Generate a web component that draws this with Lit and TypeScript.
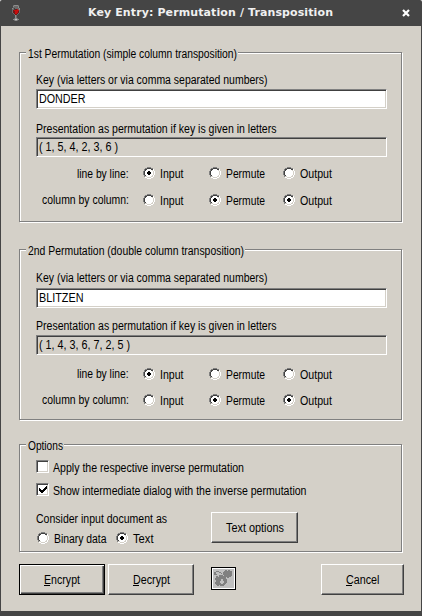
import { LitElement, html, svg, css, nothing } from "lit";
import { customElement, property } from "lit/decorators.js";

/** Draws a small pixel pattern, one character per pixel. */
const PALETTE: Record<string, string> = {
  g: "#808080", k: "#404040", w: "#ffffff", l: "#d4d0c8", b: "#000000",
  s: "#c0c0c0", a: "#8c8c8c", m: "#6a6a6a", r: "#c80c0c", d: "#701818", p: "#c86a6a",
};

const pixels = (rows: string[]) => {
  const runs: unknown[] = [];
  rows.forEach((row, y) => {
    let x = 0;
    while (x < row.length) {
      let end = x + 1;
      while (row[end] === row[x]) end++;
      const fill = PALETTE[row[x]];
      if (fill) runs.push(svg`<rect x=${x} y=${y} width=${end - x} height="1" fill=${fill}></rect>`);
      x = end;
    }
  });
  const w = Math.max(...rows.map((r) => r.length));
  return html`<svg width=${w} height=${rows.length} viewBox="0 0 ${w} ${rows.length}" shape-rendering="crispEdges">${runs}</svg>`;
};

const RADIO = [
  "....gggg....",
  "..ggkkkkgg..",
  ".gkkwwwwkkw.",
  ".gkwwwwwwlw.",
  "gkwwwwwwwwlw",
  "gkwwwwwwwwlw",
  "gkwwwwwwwwlw",
  "gkwwwwwwwwlw",
  ".gkwwwwwwlw.",
  ".gllwwwwllw.",
  "..wwllllww..",
  "....wwww....",
];
const RADIO_ON = RADIO.map((row, y) => {
  if (y === 4 || y === 7) return row.slice(0, 5) + "bb" + row.slice(7);
  if (y === 5 || y === 6) return row.slice(0, 4) + "bbbb" + row.slice(8);
  return row;
});
const TICK = [
  ".......b",
  "......bb",
  "b....bbb",
  "bb..bbb.",
  "bbbbbb..",
  ".bbbb...",
  "..bb....",
];
const GLASS = [
  ".maaaam.",
  ".ammmma.",
  ".mmmmma.",
  "amkmmmma",
  "mmkddrma",
  "mdrrrrrm",
  "mddrrrdm",
  "mddrrrdm",
  ".mdrrdm.",
  "..mddm..",
  "...am...",
  "...am...",
  "...am...",
  "..maam..",
  ".aassaa.",
  "..maam..",
];
const GEARS = [
  "............gg.gg..",
  "...ggg.....gggggggg",
  ".gg...gg..ggggggggg",
  ".gg.....g.ggggggggg",
  ".ggg......ggggggggg",
  "......gggg.gggggggg",
  "...gg.gggggggggggg.",
  "...gggggggggg.gg...",
  "..ggggggggggg......",
  "..ggggggssgggg.....",
  "...gggggssgggg.....",
  "...ggggssssggg.....",
  "..gggggssssggg.....",
  "..ggggggssggg......",
  "...ggggggggg.......",
  "....gg.gggg........",
];

@customElement("fit-text")
export class FitText extends LitElement {
  @property() text = "";
  @property({ type: Number }) w = 0;
  @property({ type: Boolean }) mnemonic = false;
  static styles = css`
    :host { display: block; height: 14px; flex: none; }
    svg { display: block; overflow: visible; }
    text { font: 12px "Liberation Sans", Arial, sans-serif; fill: #000; }
    .bar { fill: #000; }
  `;
  render() {
    return html`<svg width=${this.w} height="14">
      <text x="0" y="11" textLength=${this.w} lengthAdjust="spacingAndGlyphs">${this.text}</text>
      ${this.mnemonic ? svg`<rect class="bar" x="0" y="12" width="6" height="1"></rect>` : nothing}
    </svg>`;
  }
}

const label = (text: string, w: number, cls = "") =>
  html`<fit-text class=${cls} .text=${text} .w=${w}></fit-text>`;

interface Permutation {
  name: string; title: string; titleWidth: number;
  key: string; keyWidth: number; order: string; orderWidth: number;
}

const PERMUTATIONS: Permutation[] = [
  { name: "first", title: "1st Permutation (simple column transposition)", titleWidth: 209,
    key: "DONDER", keyWidth: 46.5, order: "( 1, 5, 4, 2, 3, 6 )", orderWidth: 79 },
  { name: "second", title: "2nd Permutation (double column transposition)", titleWidth: 216,
    key: "BLITZEN", keyWidth: 44.5, order: "( 1, 4, 3, 6, 7, 2, 5 )", orderWidth: 91 },
];

@customElement("app-root")
export class AppRoot extends LitElement {
  static styles = css`
    :host { display: block; background: #fff; }
    * { box-sizing: border-box; }
    svg { display: block; }
    .window { width: 422px; height: 616px; background: #454545; padding: 0 1px 5px; border-radius: 2px 2px 0 0; display: flex; flex-direction: column; }
    .bar { height: 26px; flex: none; display: flex; align-items: flex-start; }
    .glass { margin: 5px 0 0 11px; width: 8px; }
    .title { margin: 3px 0 0 68px; width: 245px; height: 20px; overflow: visible; }
    .title text { font: bold 11px "DejaVu Sans", sans-serif; fill: #f0f0f0; }
    .close { margin: 9px 0 0 69px; }
    .body { flex: 1; background: #d4d0c8; padding: 26px 0 0 18px; }

    .group { width: 383px; border: 1px solid #808080; box-shadow: 1px 1px 0 #fff, inset 1px 1px 0 #fff; padding-left: 16px; }
    .first { height: 170px; --a: 12px; --b: 2px; --c: 13px; --d: 1px; }
    .second { height: 171px; margin-top: 27px; --a: 13px; --b: 3px; --c: 11px; --d: 2px; }
    .options { height: 108px; margin-top: 24px; }
    .legend { width: max-content; margin: -6px 0 0 -10px; padding: 0 1px 0 2px; background: #d4d0c8; }

    .keylabel { margin-top: var(--a); }
    .orderlabel { margin-top: var(--c); }
    .field { width: 351px; height: 20px; background: #fff; border: 1px solid; border-color: #808080 #fff #fff #808080; box-shadow: inset 1px 1px 0 #404040, inset -1px -1px 0 #d4d0c8; padding: 2px 0 0 2px; }
    .key { margin-top: var(--b); }
    .order { margin-top: var(--d); background: #d4d0c8; }
    .line { display: grid; grid-template-columns: 92.5px 66px 74px auto; height: 14px; }
    .line > fit-text { justify-self: end; }
    .l1 { margin-top: 10px; }
    .second .l1 { margin-top: 12px; }
    .l2 { margin-top: 12px; }
    .line .choice { margin: 1px 0 0 14.5px; }
    .first .l1 .choice { margin-top: 0; }
    .choice { display: flex; align-items: flex-start; }
    .choice fit-text { margin-left: 4.5px; }

    .check { display: flex; align-items: flex-start; height: 14px; }
    .check fit-text { margin: 1px 0 0 4px; }
    .box { width: 13px; height: 13px; background: #fff; border: 1px solid; border-color: #808080 #fff #fff #808080; box-shadow: inset 1px 1px 0 #404040, inset -1px -1px 0 #d4d0c8; padding: 2px 0 0 2px; }
    .k1 { margin-top: 7px; }
    .k2 { margin-top: 9px; }
    .lower { display: flex; margin-top: 15px; }
    .source { width: 175px; }
    .source .pair { display: flex; margin: 6px 0 0 1px; }
    .source .choice + .choice { margin-left: 10px; }

    button { appearance: none; border-radius: 0; margin: 0; padding: 0; height: 31px; background: #d4d0c8; border: 1px solid; border-color: #fff #404040 #404040 #fff; box-shadow: inset -1px -1px 0 #808080; display: flex; align-items: flex-start; justify-content: center; flex: none; }
    button fit-text { margin-top: 8px; }
    .default { border-color: #000; box-shadow: inset 1px 1px 0 #fff, inset -1px -1px 0 #404040, inset -2px -2px 0 #808080; }
    .wide { width: 86px; }
    .text { width: 87px; }
    .actions { display: flex; margin-top: 12px; }
    .decrypt { margin-left: 3px; }
    .tool { width: 25px; height: 23px; margin: 3px 0 0 17px; border-color: #000; background: #c0c0c0; box-shadow: inset 0 0 0 1px #fff; padding: 2px 0 0 1px; justify-content: flex-start; }
    .cancel { width: 83px; margin-left: 85px; }
  `;

  private choice(text: string, w: number, on: boolean) {
    return html`<div class="choice" role="radio" aria-checked=${on}>${pixels(on ? RADIO_ON : RADIO)}${label(text, w)}</div>`;
  }

  private line(cls: string, text: string, w: number, on: boolean[]) {
    return html`<div class="line ${cls}">
      ${label(text, w)}
      ${this.choice("Input", 23.5, on[0])}
      ${this.choice("Permute", 39, on[1])}
      ${this.choice("Output", 32, on[2])}
    </div>`;
  }

  private permutation(p: Permutation) {
    return html`<section class="group ${p.name}">
      <div class="legend">${label(p.title, p.titleWidth)}</div>
      ${label("Key (via letters or via comma separated numbers)", 231.5, "keylabel")}
      <div class="field key">${label(p.key, p.keyWidth)}</div>
      ${label("Presentation as permutation if key is given in letters", 240.5, "orderlabel")}
      <div class="field order">${label(p.order, p.orderWidth)}</div>
      ${this.line("l1", "line by line:", 51.5, [true, false, false])}
      ${this.line("l2", "column by column:", 87, [false, true, true])}
    </section>`;
  }

  private caption(text: string, w: number) {
    return html`<fit-text .text=${text} .w=${w} .mnemonic=${true}></fit-text>`;
  }

  render() {
    return html`<div class="window">
      <header class="bar">
        <div class="glass">${pixels(GLASS)}</div>
        <svg class="title"><text x="0" y="13" textLength="245">Key Entry: Permutation / Transposition</text></svg>
        <svg class="close" width="8" height="8" viewBox="0 0 8 8"><path d="M1 1L7 7M7 1L1 7" stroke="#fff" stroke-width="2.2"></path></svg>
      </header>
      <main class="body">
        ${PERMUTATIONS.map((p) => this.permutation(p))}
        <section class="group options">
          <div class="legend">${label("Options", 35)}</div>
          <div class="check k1"><div class="box"></div>${label("Apply the respective inverse permutation", 191)}</div>
          <div class="check k2"><div class="box">${pixels(TICK)}</div>${label("Show intermediate dialog with the inverse permutation", 253.5)}</div>
          <div class="lower">
            <div class="source">
              ${label("Consider input document as", 131)}
              <div class="pair">
                ${this.choice("Binary data", 52.5, false)}
                ${this.choice("Text", 20.5, true)}
              </div>
            </div>
            <button class="text">${label("Text options", 58)}</button>
          </div>
        </section>
        <footer class="actions">
          <button class="wide default">${this.caption("Encrypt", 36)}</button>
          <button class="wide decrypt">${this.caption("Decrypt", 37)}</button>
          <button class="tool" aria-label="Settings">${pixels(GEARS)}</button>
          <button class="cancel">${this.caption("Cancel", 33.5)}</button>
        </footer>
      </main>
    </div>`;
  }
}
